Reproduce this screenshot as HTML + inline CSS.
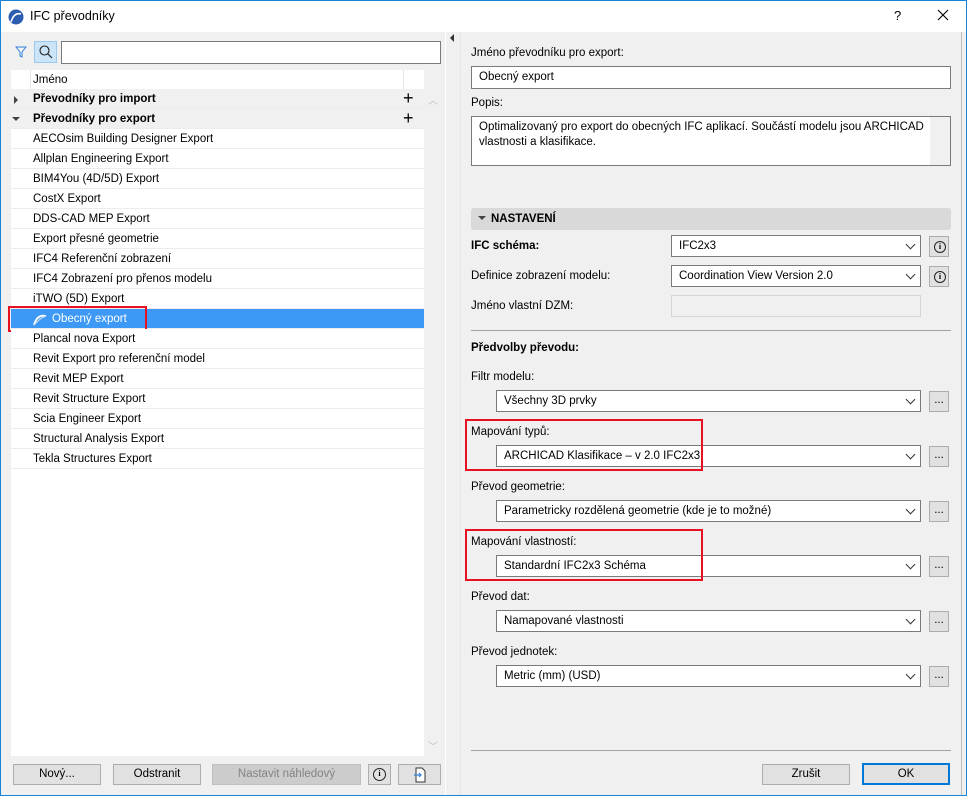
<!DOCTYPE html>
<html><head><meta charset="utf-8"><style>
*{box-sizing:border-box;margin:0;padding:0}
body{width:967px;height:796px;overflow:hidden;font-family:"Liberation Sans",sans-serif;font-size:11.5px;color:#000;background:#f0f0f0;position:relative}
.a{position:absolute}
.win{left:0;top:0;width:967px;height:796px;border:1px solid #1883d7;border-top:none}
.title{left:0;top:0;width:967px;height:32px;background:#fff;border-top:1px solid #1883d7}
.row{position:absolute;left:11px;width:413px;height:20px;line-height:21px;padding-left:22px;border-bottom:1px solid #ececec;background:#fff;white-space:nowrap}
.grp{background:#f0f0f0;font-weight:bold;padding-left:22px}
.btn{position:absolute;height:21px;border:1px solid #adadad;background:#e1e1e1;text-align:center;line-height:19px}
.inp{position:absolute;background:#fff;border:1px solid #7a7a7a;padding-left:7px;line-height:21px;white-space:nowrap}
.sel{position:absolute;background:#fff;border:1px solid #7a7a7a;padding-left:7px;height:22px;line-height:21px}
.sel:after{content:"";position:absolute;right:6px;top:5px;width:6px;height:6px;border-right:1px solid #333;border-bottom:1px solid #333;transform:rotate(45deg)}
.dots{position:absolute;left:929px;width:20px;height:21px;border:1px solid #adadad;background:#e1e1e1;text-align:center;line-height:17px}
.info{position:absolute;left:929px;width:20px;height:21px;border:1px solid #adadad;background:#e1e1e1}
.ic{position:absolute;left:4px;top:4px;width:12px;height:12px;border:1.2px solid #222;border-radius:50%;font-size:8px;line-height:10px;text-align:center;font-weight:bold;font-family:"Liberation Serif",serif}
.lbl{position:absolute;left:471px;white-space:nowrap}
.red{position:absolute;border:2px solid #e81123}
</style></head><body>
<div class="a title">
 <svg class="a" style="left:8px;top:8px" width="16" height="16"><circle cx="8" cy="8" r="7.5" fill="#2a5db0"/><path d="M3 13 Q6 3 13 5" stroke="#fff" stroke-width="1.6" fill="none"/></svg>
 <div class="a" style="left:30px;top:8px;font-size:12.5px">IFC převodníky</div>
 <div class="a" style="left:894px;top:7px;font-size:13px">?</div>
 <svg class="a" style="left:937px;top:8px" width="12" height="12"><path d="M1 1L11 11M11 1L1 11" stroke="#000" stroke-width="1.1"/></svg>
</div>
<div class="a win"></div>
<svg class="a" style="left:15px;top:46px" width="12" height="12"><path d="M1 1H11L7 6V11L5 10V6Z" fill="none" stroke="#2f7fd8" stroke-width="1"/></svg>
<div class="a" style="left:34px;top:41px;width:23px;height:22px;background:#cce4f7;border:1px solid #99c9ef"></div>
<svg class="a" style="left:38px;top:44px" width="16" height="16"><circle cx="6.5" cy="6.5" r="4.5" fill="none" stroke="#222" stroke-width="1.1"/><path d="M10 10L14 14" stroke="#222" stroke-width="1.2"/></svg>
<div class="a" style="left:61px;top:41px;width:380px;height:23px;background:#fff;border:1px solid #7a7a7a"></div>
<div class="a" style="left:11px;top:70px;width:413px;height:686px;background:#fff"></div>
<div class="row" style="top:70px;background:#fff;border-bottom:none">Jméno</div>
<div class="a" style="left:30px;top:70px;width:1px;height:19px;background:#e5e5e5"></div>
<div class="a" style="left:403px;top:70px;width:1px;height:19px;background:#e5e5e5"></div>
<div class="row grp" style="top:89px">Převodníky pro import</div>
<div class="row grp" style="top:109px">Převodníky pro export</div>
<div class="a" style="left:14px;top:96px;border-left:4px solid #444;border-top:4px solid transparent;border-bottom:4px solid transparent"></div>
<div class="a" style="left:12px;top:117px;border-top:4px solid #444;border-left:4px solid transparent;border-right:4px solid transparent"></div>
<div class="a" style="left:403px;top:88px;font-size:18px;font-weight:300">+</div>
<div class="a" style="left:403px;top:108px;font-size:18px;font-weight:300">+</div>
<div class="row" style="top:129px">AECOsim Building Designer Export</div>
<div class="row" style="top:149px">Allplan Engineering Export</div>
<div class="row" style="top:169px">BIM4You (4D/5D) Export</div>
<div class="row" style="top:189px">CostX Export</div>
<div class="row" style="top:209px">DDS-CAD MEP Export</div>
<div class="row" style="top:229px">Export přesné geometrie</div>
<div class="row" style="top:249px">IFC4 Referenční zobrazení</div>
<div class="row" style="top:269px">IFC4 Zobrazení pro přenos modelu</div>
<div class="row" style="top:289px">iTWO (5D) Export</div>
<div class="row" style="top:309px;background:#3d99f5;color:#fff;padding-left:41px">Obecný export</div>
<svg class="a" style="left:33px;top:312px" width="14" height="14"><path d="M1 13 Q4 2 13 4" stroke="#fff" stroke-width="1.8" fill="none"/><path d="M1 13 Q7 6 13 4" stroke="#cfe2f7" stroke-width="1" fill="none"/></svg>
<div class="red" style="left:8px;top:306px;width:139px;height:26px"></div>
<div class="row" style="top:329px">Plancal nova Export</div>
<div class="row" style="top:349px">Revit Export pro referenční model</div>
<div class="row" style="top:369px">Revit MEP Export</div>
<div class="row" style="top:389px">Revit Structure Export</div>
<div class="row" style="top:409px">Scia Engineer Export</div>
<div class="row" style="top:429px">Structural Analysis Export</div>
<div class="row" style="top:449px">Tekla Structures Export</div>
<div class="a" style="left:424px;top:89px;width:17px;height:667px;background:#f0f0f0"></div>
<div class="a" style="left:428px;top:92px;color:#bbb;font-size:10px">︿</div>
<div class="a" style="left:428px;top:738px;color:#bbb;font-size:10px">﹀</div>
<div class="btn" style="left:13px;top:764px;width:88px">Nový...</div>
<div class="btn" style="left:113px;top:764px;width:88px">Odstranit</div>
<div class="btn" style="left:212px;top:764px;width:149px;background:#cccccc;border-color:#bfbfbf;color:#838383">Nastavit náhledový</div>
<div class="btn" style="left:368px;top:764px;width:23px"><div class="ic" style="left:4px;top:3px;width:13px;height:13px">i</div></div>
<div class="btn" style="left:398px;top:764px;width:43px"><svg class="a" style="left:14px;top:2px" width="14" height="16"><path d="M3 1H9L12 4V15H3Z" fill="#fff" stroke="#333"/><path d="M1 8H8M6 6L8 8L6 10" stroke="#2f7fd8" fill="none" stroke-width="1.2"/></svg></div>
<div class="a" style="left:445px;top:32px;width:1px;height:763px;background:#fff"></div>
<div class="a" style="left:450px;top:34px;border-right:4px solid #333;border-top:4px solid transparent;border-bottom:4px solid transparent"></div>
<div class="a" style="left:460px;top:32px;width:1px;height:763px;background:#e6e6e6"></div>
<div class="a" style="left:961px;top:32px;width:1px;height:763px;background:#bdbdbd"></div>
<div class="lbl" style="top:47px">Jméno převodníku pro export:</div>
<div class="inp" style="left:471px;top:66px;width:480px;height:23px">Obecný export</div>
<div class="lbl" style="top:97px">Popis:</div>
<div class="inp" style="left:471px;top:116px;width:480px;height:50px;line-height:15px;padding-top:3px;white-space:normal;padding-right:26px">Optimalizovaný pro export do obecných IFC aplikací. Součástí modelu jsou ARCHICAD vlastnosti a klasifikace.</div>
<div class="a" style="left:930px;top:117px;width:20px;height:48px;background:#f0f0f0"></div>
<div class="a" style="left:471px;top:208px;width:480px;height:22px;background:#d9d9d9;border-radius:3px;font-weight:bold;line-height:22px;padding-left:20px">NASTAVENÍ</div>
<div class="a" style="left:478px;top:216px;border-top:4px solid #444;border-left:4px solid transparent;border-right:4px solid transparent"></div>
<div class="lbl" style="top:240px;font-weight:bold">IFC schéma:</div>
<div class="sel" style="left:671px;top:235px;width:250px">IFC2x3</div>
<div class="info" style="top:236px"><div class="ic">i</div></div>
<div class="lbl" style="top:270px">Definice zobrazení modelu:</div>
<div class="sel" style="left:671px;top:265px;width:250px">Coordination View Version 2.0</div>
<div class="info" style="top:266px"><div class="ic">i</div></div>
<div class="lbl" style="top:300px">Jméno vlastní DZM:</div>
<div class="a" style="left:671px;top:295px;width:250px;height:22px;border:1px solid #d5d5d5;background:#f0f0f0"></div>
<div class="a" style="left:471px;top:330px;width:480px;height:1px;background:#a0a0a0"></div>
<div class="lbl" style="top:342px;font-weight:bold">Předvolby převodu:</div>
<div class="lbl" style="top:371px">Filtr modelu:</div>
<div class="sel" style="left:496px;top:390px;width:425px">Všechny 3D prvky</div>
<div class="dots" style="top:391px">...</div>
<div class="lbl" style="top:426px">Mapování typů:</div>
<div class="sel" style="left:496px;top:445px;width:425px">ARCHICAD Klasifikace – v 2.0 IFC2x3</div>
<div class="dots" style="top:446px">...</div>
<div class="red" style="left:465px;top:419px;width:238px;height:52px"></div>
<div class="lbl" style="top:481px">Převod geometrie:</div>
<div class="sel" style="left:496px;top:500px;width:425px">Parametricky rozdělená geometrie (kde je to možné)</div>
<div class="dots" style="top:501px">...</div>
<div class="lbl" style="top:536px">Mapování vlastností:</div>
<div class="sel" style="left:496px;top:555px;width:425px">Standardní IFC2x3 Schéma</div>
<div class="dots" style="top:556px">...</div>
<div class="red" style="left:465px;top:529px;width:238px;height:52px"></div>
<div class="lbl" style="top:591px">Převod dat:</div>
<div class="sel" style="left:496px;top:610px;width:425px">Namapované vlastnosti</div>
<div class="dots" style="top:611px">...</div>
<div class="lbl" style="top:646px">Převod jednotek:</div>
<div class="sel" style="left:496px;top:665px;width:425px">Metric (mm) (USD)</div>
<div class="dots" style="top:666px">...</div>
<div class="a" style="left:471px;top:750px;width:480px;height:1px;background:#a0a0a0"></div>
<div class="btn" style="left:762px;top:764px;width:88px">Zrušit</div>
<div class="btn" style="left:862px;top:763px;width:88px;height:22px;border:2px solid #0078d7;line-height:18px">OK</div>
</body></html>
